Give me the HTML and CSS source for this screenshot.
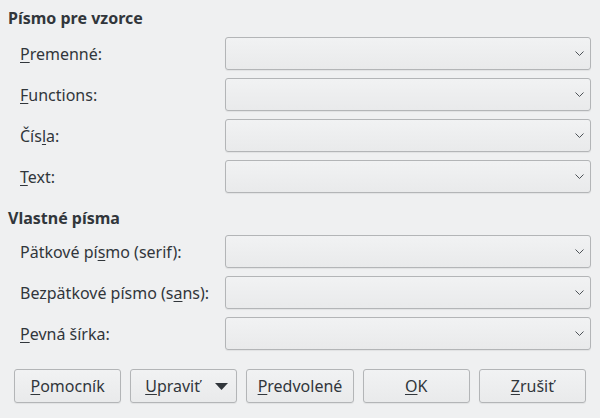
FILE: index.html
```html
<!DOCTYPE html>
<html lang="sk">
<head>
<meta charset="utf-8">
<title>Písma</title>
<link rel="stylesheet" href="styles.css">
</head>
<body>
<div class="dialog">
  <section class="group">
    <h2 class="group-title">Písmo pre vzorce</h2>
    <div class="form">
      <label class="label"><u>P</u>remenné:</label>
      <div class="combo"><svg class="chev" viewBox="0 0 9 5" width="9" height="5"><path d="M0.5 0.5 L4.5 4.5 L8.5 0.5" /></svg></div>
      <label class="label"><u>F</u>unctions:</label>
      <div class="combo"><svg class="chev" viewBox="0 0 9 5" width="9" height="5"><path d="M0.5 0.5 L4.5 4.5 L8.5 0.5" /></svg></div>
      <label class="label">Čís<u>l</u>a:</label>
      <div class="combo"><svg class="chev" viewBox="0 0 9 5" width="9" height="5"><path d="M0.5 0.5 L4.5 4.5 L8.5 0.5" /></svg></div>
      <label class="label"><u>T</u>ext:</label>
      <div class="combo"><svg class="chev" viewBox="0 0 9 5" width="9" height="5"><path d="M0.5 0.5 L4.5 4.5 L8.5 0.5" /></svg></div>
    </div>
  </section>
  <section class="group group-second">
    <h2 class="group-title">Vlastné písma</h2>
    <div class="form">
      <label class="label">Pätkové pí<u>s</u>mo (serif):</label>
      <div class="combo"><svg class="chev" viewBox="0 0 9 5" width="9" height="5"><path d="M0.5 0.5 L4.5 4.5 L8.5 0.5" /></svg></div>
      <label class="label">Bezpätkové písmo (s<u>a</u>ns):</label>
      <div class="combo"><svg class="chev" viewBox="0 0 9 5" width="9" height="5"><path d="M0.5 0.5 L4.5 4.5 L8.5 0.5" /></svg></div>
      <label class="label"><u>P</u>evná šírka:</label>
      <div class="combo"><svg class="chev" viewBox="0 0 9 5" width="9" height="5"><path d="M0.5 0.5 L4.5 4.5 L8.5 0.5" /></svg></div>
    </div>
  </section>
  <div class="buttons">
    <button class="btn"><u>P</u>omocník</button>
    <button class="btn btn-menu"><span><u>U</u>praviť</span><svg class="tri" viewBox="0 0 13 7" width="13" height="7"><path d="M0 0 H13 L6.5 7 Z" /></svg></button>
    <button class="btn"><u>P</u>redvolené</button>
    <button class="btn"><u>O</u>K</button>
    <button class="btn"><u>Z</u>rušiť</button>
  </div>
</div>
</body>
</html>
```

FILE: styles.css
```css
html, body {
  margin: 0;
  padding: 0;
  background: #eff0f1;
}
body {
  font-family: "Noto Sans", "Open Sans", sans-serif;
  font-size: 16px;
  color: #31363b;
  width: 600px;
  height: 418px;
  overflow: hidden;
}
.dialog {
  padding: 7px 9px 0 8px;
}
.group-title {
  margin: 0 0 8px 0;
  font-size: 16px;
  font-weight: bold;
  line-height: 22px;
}
.group-second {
  margin-top: 14px;
}
.group-second .group-title {
  margin-bottom: 6px;
}
.form {
  display: grid;
  grid-template-columns: 217px 1fr;
  grid-auto-rows: 33px;
  row-gap: 8px;
  align-items: center;
}
.label {
  padding-left: 12px;
  line-height: 20px;
  white-space: nowrap;
}
u {
  text-decoration: underline;
  text-underline-offset: 2px;
  text-decoration-thickness: 1px;
}
.combo {
  height: 33px;
  box-sizing: border-box;
  border: 1px solid #b3b5b7;
  border-radius: 3px;
  background: linear-gradient(#f1f2f3, #e9eaeb);
  box-shadow: 0 1px 1px rgba(0,0,0,0.06);
  display: flex;
  align-items: center;
  justify-content: flex-end;
  padding-right: 6px;
}
.chev path {
  fill: none;
  stroke: #4d5257;
  stroke-width: 1;
}
.buttons {
  display: grid;
  grid-template-columns: repeat(5, 1fr);
  column-gap: 9px;
  margin: 19px 5px 0 6px;
}
.btn {
  height: 34px;
  min-width: 0;
  box-sizing: border-box;
  border: 1px solid #b3b5b7;
  border-radius: 3px;
  background: linear-gradient(#f1f2f3, #e9eaeb);
  box-shadow: 0 1px 1px rgba(0,0,0,0.06);
  font-family: inherit;
  font-size: 16px;
  color: #31363b;
  padding: 0;
}
.btn-menu {
  display: flex;
  align-items: center;
  justify-content: space-between;
  padding: 0 8px 0 14px;
}
.tri path {
  fill: #31363b;
}
```
